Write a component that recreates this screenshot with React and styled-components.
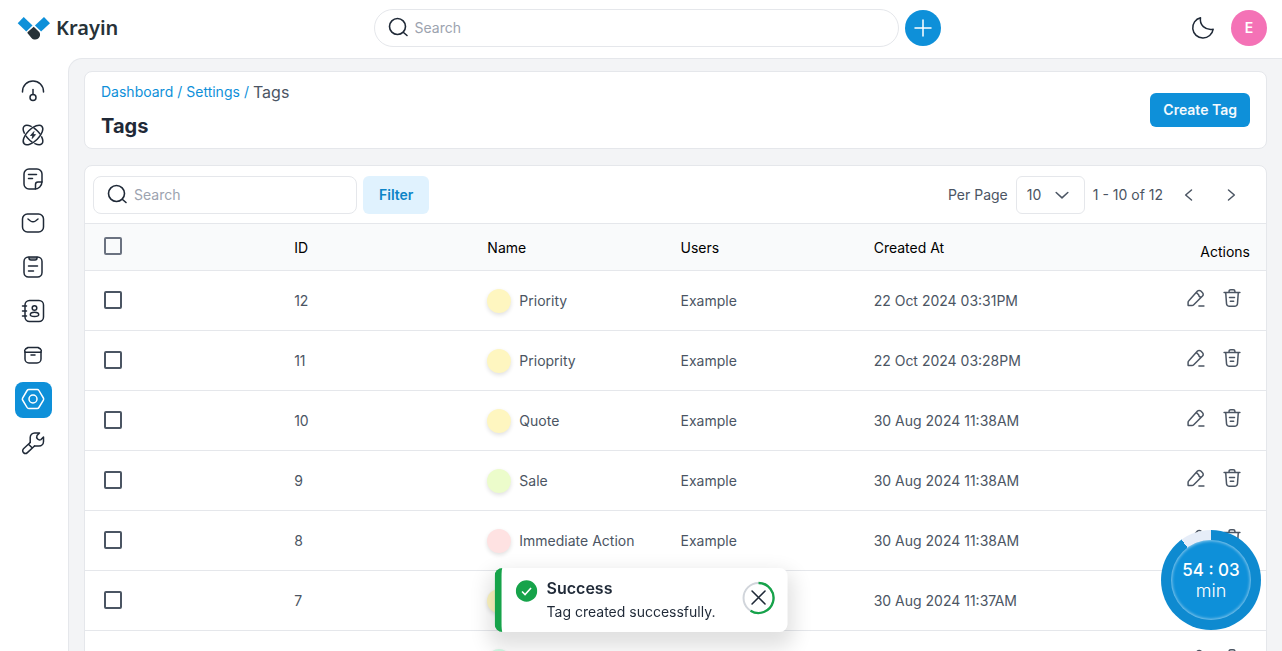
import React from "react";
import styled, { createGlobalStyle } from "styled-components";

//colors
const blue = "#0e90d9";
const line = "#e5e7eb";
const dark = "#1f2937";
const gray = "#4b5563";

//tag rows
const tags = [
  { id: "12", name: "Priority", user: "Example", date: "22 Oct 2024 03:31PM", color: "#fef6c0" },
  { id: "11", name: "Prioprity", user: "Example", date: "22 Oct 2024 03:28PM", color: "#fef6c0" },
  { id: "10", name: "Quote", user: "Example", date: "30 Aug 2024 11:38AM", color: "#fef6c0" },
  { id: "9", name: "Sale", user: "Example", date: "30 Aug 2024 11:38AM", color: "#ecfccb" },
  { id: "8", name: "Immediate Action", user: "Example", date: "30 Aug 2024 11:38AM", color: "#fee2e2" },
  { id: "7", date: "30 Aug 2024 11:37AM", color: "#fef6c0" },
  { color: "#d1fae5" },
];

//sidebar menu
const menu = [
  {
    label: "Dashboard",
    icon: (
      <>
        <path d="M1.500 13v-.5a10.500 10.500 0 0 1 21 0v.5" />
        <circle cx="12" cy="18.500" r="3" />
        <path d="M12 15.500V10.500" />
      </>
    ),
  },
  {
    label: "Leads",
    icon: (
      <>
        <ellipse cx="12" cy="12" rx="12.500" ry="6" transform="rotate(-45 12 12)" />
        <ellipse
          cx="12"
          cy="12"
          rx="12.500"
          ry="6"
          transform="rotate(45 12 12)"
          pathLength="60"
          strokeDasharray="7.500 3.400 8.200 3.400 15 3.400 8.200 3.400 7.500 0"
        />
        <path d="M12.800 8.800l-3.300 3.700h2.200l-.5 3 3.300-3.900h-2.200z" fill="currentColor" strokeWidth="0.800" />
      </>
    ),
  },
  {
    label: "Quotes",
    icon: (
      <>
        <path d="M21 14.500V7a5 5 0 0 0-5-5H8a5 5 0 0 0-5 5v10a5 5 0 0 0 5 5h5.500c4 0 7.500-3 7.500-7.500z" />
        <path d="M21 15h-4a2.500 2.500 0 0 0-2.500 2.500V22M7.500 7.500h8M7.500 11.500h4" />
      </>
    ),
  },
  {
    label: "Mail",
    icon: (
      <>
        <rect x="1.500" y="3" width="21" height="18" rx="5" />
        <path d="M7 8l2.500 2a4.500 4.500 0 0 0 5 0L17 8" />
      </>
    ),
  },
  {
    label: "Activities",
    icon: (
      <>
        <rect x="3" y="2" width="18" height="20" rx="4.500" />
        <path d="M8 2.500v.5a2 2 0 0 0 2 2h4a2 2 0 0 0 2-2v-.5M7.500 11h9M7.500 16h5" />
        <path d="M9 3.200h6" strokeWidth="2" opacity="0.6" />
      </>
    ),
  },
  {
    label: "Contacts",
    icon: (
      <>
        <rect x="4" y="1.500" width="18.500" height="21" rx="4.500" />
        <path d="M1.500 7h4M1.500 12h4M1.500 17h4" />
        <circle cx="13.500" cy="9" r="2.300" />
        <path d="M13.500 13.200c-2.500 0-4.200 1.200-4.200 2.500s1.500 1.700 4.200 1.700 4.200-.4 4.200-1.700-1.700-2.500-4.200-2.500z" />
      </>
    ),
  },
  {
    label: "Products",
    icon: (
      <>
        <path d="M4 9v7a4 4 0 0 0 4 4h8a4 4 0 0 0 4-4V9" />
        <path d="M7 4.500h10L19.500 6c.8.600 1 2 .5 3.200H4C3.500 8 3.700 6.600 4.500 6zM10 12h4" />
      </>
    ),
  },
  {
    label: "Settings",
    active: true,
    icon: (
      <>
        <path d="M7.800 2.500h8.400a2 2 0 0 1 1.700 1l4.500 7.500a2 2 0 0 1 0 2l-4.500 7.500a2 2 0 0 1-1.700 1H7.800a2 2 0 0 1-1.700-1L1.600 13a2 2 0 0 1 0-2l4.500-7.500a2 2 0 0 1 1.700-1z" />
        <circle cx="12" cy="12" r="4" />
      </>
    ),
  },
  {
    label: "Configuration",
    icon: (
      <>
        <path d="M9.200 11.500V6.500a4.500 4.500 0 0 1 4.500-4.500h4.800l-2.500 2.600a3 3 0 0 0 4 4L22.500 6v4.500a4.500 4.500 0 0 1-4.500 4.500h-4.500" />
        <path d="M9.200 11.500l-6.700 6.200a2.700 2.700 0 0 0 3.900 3.900l7.100-6.600M7.500 13.200l3.600 3.600" />
      </>
    ),
  },
];

function Icon({ size = 24, width = 1.5, children }) {
  return (
    <svg
      width={size}
      height={size}
      viewBox="0 0 24 24"
      fill="none"
      stroke="currentColor"
      strokeWidth={width}
      strokeLinecap="round"
      strokeLinejoin="round"
      aria-hidden="true"
    >
      {children}
    </svg>
  );
}

function SearchIcon() {
  return (
    <Icon width={1.6}>
      <circle cx="11.500" cy="10.500" r="8" />
      <path d="M17.500 16.500l3.500 3" />
    </Icon>
  );
}

function TagRow({ tag }) {
  return (
    <SRow>
      <td>
        <SCheck type="checkbox" aria-label="Select tag" />
      </td>
      <td>{tag.id}</td>
      <td>
        <STag>
          <SDot $color={tag.color} />
          {tag.name}
        </STag>
      </td>
      <td>{tag.user}</td>
      <td>{tag.date}</td>
      <td>
        <SActions>
          <SIconButton aria-label="Edit">
            <Icon size={20} width={1.8}>
              <path d="M2.500 20.500v-3.200a3 3 0 0 1 .9-2.100L13.800 3.700a2.800 2.800 0 0 1 4 0l2 2a2.800 2.800 0 0 1 0 4L9.300 20.100a3 3 0 0 1-2.100.9H3a.5.5 0 0 1-.5-.5zM12.500 5.300l2.800 3a2.500 2.500 0 0 0 3.200 2.500M15.500 21.500h6" />
            </Icon>
          </SIconButton>
          <SIconButton aria-label="Delete">
            <Icon size={20} width={1.8}>
              <path d="M2.500 5.500h19M8.500 5.500V4a2 2 0 0 1 2-2h3a2 2 0 0 1 2 2v1.500M4.500 6l.9 12.500A3.500 3.500 0 0 0 9 22h6a3.500 3.500 0 0 0 3.600-3.500L19.500 6M9 11.500h6M10 16h4" />
            </Icon>
          </SIconButton>
        </SActions>
      </td>
    </SRow>
  );
}

export default function App() {
  return (
    <SPage>
      <GlobalStyle />
      <SHeader>
        <SLogo href="#">
          <svg width="34" height="26" viewBox="0 0 34 26" aria-hidden="true">
            <path d="M6.700 2l8.800 8.400-6.200 6.200L.7 8.200z" fill={blue} />
            <path d="M27 2l6 6.200-8.900 8.400-6.200-6.200z" fill={blue} />
            <path
              d="M16.700 11.700l5.500 5.300c1 1 1.100 3.300.5 4.600-.8 1.800-2.500 3-4.500 3-1.600 0-2.700-.5-3.700-1.500l-3.900-4.800c-.4-.5-.3-1 .1-1.400z"
              fill="#273238"
            />
          </svg>
          Krayin
        </SLogo>
        <SHeaderCenter>
          <SSearch $round>
            <SearchIcon />
            <input type="text" placeholder="Search" aria-label="Global search" />
          </SSearch>
          <SAdd aria-label="Quick add">
            <Icon>
              <path d="M12 4v16M4 12h16" />
            </Icon>
          </SAdd>
        </SHeaderCenter>
        <SHeaderRight>
          <SIconButton $dark aria-label="Dark mode">
            <Icon>
              <path d="M9.500 1.700c-1.200 7.300 4.500 12.800 12.700 11.500A10.300 10.300 0 1 1 9.500 1.700z" />
            </Icon>
          </SIconButton>
          <SAvatar>E</SAvatar>
        </SHeaderRight>
      </SHeader>

      <SBody>
        <SSidebar aria-label="Main menu">
          {menu.map((item) => (
            <SMenuLink
              key={item.label}
              href="#"
              $active={item.active}
              aria-label={item.label}
            >
              <Icon>{item.icon}</Icon>
            </SMenuLink>
          ))}
        </SSidebar>

        <SMain>
          <STitleCard>
            <div>
              <SCrumbs aria-label="Breadcrumb">
                <a href="#">Dashboard</a>
                <i>/</i>
                <a href="#">Settings</a>
                <i>/</i>
                <span>Tags</span>
              </SCrumbs>
              <h1>Tags</h1>
            </div>
            <SPrimary>Create Tag</SPrimary>
          </STitleCard>

          <SCard>
            <SToolbar>
              <SToolGroup $gap={6}>
                <SSearch>
                  <SearchIcon />
                  <input type="text" placeholder="Search" aria-label="Search tags" />
                </SSearch>
                <SFilter>Filter</SFilter>
              </SToolGroup>
              <SToolGroup $gap={8}>
                <label htmlFor="perPage">Per Page</label>
                <SSelectWrap>
                  <select id="perPage" defaultValue="10">
                    <option>10</option>
                  </select>
                  <Icon size={20} width={1.8}>
                    <path d="M5 9l7 6.500L19 9" />
                  </Icon>
                </SSelectWrap>
                <span>1 - 10 of 12</span>
                <SPager>
                  <SIconButton aria-label="Previous page">
                    <Icon size={20} width={1.8}>
                      <path d="M15 6l-7 6 7 6" />
                    </Icon>
                  </SIconButton>
                  <SIconButton aria-label="Next page">
                    <Icon size={20} width={1.8}>
                      <path d="M9 6l7 6-7 6" />
                    </Icon>
                  </SIconButton>
                </SPager>
              </SToolGroup>
            </SToolbar>
            <STable>
              <thead>
                <SHeadRow>
                  <th>
                    <SCheck type="checkbox" $light aria-label="Select all" />
                  </th>
                  <th>ID</th>
                  <th>Name</th>
                  <th>Users</th>
                  <th>Created At</th>
                  <th>Actions</th>
                </SHeadRow>
              </thead>
              <tbody>
                {tags.map((tag, index) => (
                  <TagRow key={index} tag={tag} />
                ))}
              </tbody>
            </STable>
          </SCard>
        </SMain>
      </SBody>

      {/* flash message */}
      <SToast role="status">
        <svg width="22" height="22" viewBox="0 0 22 22" aria-hidden="true">
          <circle cx="11" cy="11" r="10.700" fill="#16a34a" />
          <path
            d="M6.500 11.500l3 3 6-6.500"
            fill="none"
            stroke="#fff"
            strokeWidth="1.600"
          />
        </svg>
        <div>
          <h2>Success</h2>
          <p>Tag created successfully.</p>
        </div>
        <SClose aria-label="Close">
          <svg width="34" height="34" viewBox="0 0 34 34" fill="none">
            <circle cx="17" cy="17" r="15" stroke="#d1d5db" strokeWidth="2" />
            <path
              d="M17 2a15 15 0 1 1-8 27.700"
              stroke="#16a34a"
              strokeWidth="2.300"
            />
            <path
              d="M10.500 10l13 13M23.500 10l-13 13"
              stroke={dark}
              strokeWidth="1.600"
              strokeLinecap="round"
            />
          </svg>
        </SClose>
      </SToast>

      {/* timer */}
      <STimer role="timer">
        <STimerFace>
          <span>54 : 03</span>
          <small>min</small>
        </STimerFace>
      </STimer>
    </SPage>
  );
}

//styled components
const GlobalStyle = createGlobalStyle`
  * {
    box-sizing: border-box;
    margin: 0;
    padding: 0;
  }
  body {
    font-family: Inter, "Liberation Sans", sans-serif;
    font-size: 14px;
    line-height: 24px;
    color: ${gray};
    background: #fff;
  }
  button, input, select {
    font: inherit;
    color: inherit;
    border: none;
    background: none;
  }
  button {
    cursor: pointer;
  }
  a {
    text-decoration: none;
  }
  svg {
    display: block;
    flex-shrink: 0;
  }
`;
const SPage = styled.div`
  height: 100vh;
  display: flex;
  flex-direction: column;
  overflow: hidden;
`;
const SHeader = styled.header`
  display: flex;
  align-items: center;
  justify-content: space-between;
  padding: 9px 15px 11px 17px;
`;
const SLogo = styled.a`
  display: flex;
  align-items: center;
  gap: 5px;
  width: 112px;
  font-family: "Noto Sans", sans-serif;
  font-size: 20px;
  font-weight: 600;
  color: #273238;
`;
const SHeaderCenter = styled.div`
  display: flex;
  align-items: center;
  gap: 6px;
  width: 567px;
  max-width: 50%;
`;
const SHeaderRight = styled.div`
  display: flex;
  align-items: center;
  gap: 10px;
`;
const SSearch = styled.label`
  display: flex;
  align-items: center;
  gap: 5px;
  width: ${(props) => (props.$round ? "100%" : "264px")};
  height: 38px;
  padding: 0 11px;
  border: 1px solid ${line};
  border-radius: ${(props) => (props.$round ? "24px" : "8px")};
  color: ${dark};
  input {
    width: 100%;
    min-width: 0;
    outline: none;
  }
  input::placeholder {
    color: #9ca3af;
  }
`;
const SAdd = styled.button`
  flex: 0 0 36px;
  height: 36px;
  display: grid;
  place-items: center;
  border-radius: 50%;
  color: #fff;
  background: ${blue};
`;
const SAvatar = styled.button`
  width: 36px;
  height: 36px;
  border-radius: 50%;
  font-weight: 600;
  color: #fff;
  background: #f472b6;
`;
const SIconButton = styled.button`
  width: 36px;
  height: 36px;
  display: grid;
  place-items: center;
  color: ${(props) => (props.$dark ? dark : gray)};
`;
const SBody = styled.div`
  flex: 1;
  min-height: 0;
  display: flex;
`;
const SSidebar = styled.nav`
  display: flex;
  flex-direction: column;
  gap: 8px;
  padding: 16px 16px 0 15px;
`;
const SMenuLink = styled.a`
  width: 37px;
  height: 36px;
  padding: 5px 6px;
  border-radius: 8px;
  color: ${(props) => (props.$active ? "#fff" : dark)};
  background: ${(props) => (props.$active ? blue : "transparent")};
`;
const SMain = styled.main`
  flex: 1;
  min-width: 0;
  padding: 12px 15px 0;
  border-top: 1px solid ${line};
  border-left: 1px solid ${line};
  border-top-left-radius: 14px;
  background: #f3f4f6;
`;
const SCard = styled.section`
  border: 1px solid ${line};
  border-radius: 8px;
  background: #fff;
`;
const STitleCard = styled(SCard)`
  display: flex;
  align-items: center;
  justify-content: space-between;
  margin-bottom: 16px;
  padding: 8px 16px;
  h1 {
    margin-top: 8px;
    font-size: 20px;
    line-height: 28px;
    font-weight: 700;
    color: ${dark};
  }
`;
const SCrumbs = styled.nav`
  display: flex;
  align-items: center;
  gap: 4px;
  color: ${blue};
  a {
    color: inherit;
  }
  i {
    font-style: normal;
  }
  span {
    font-size: 16px;
    color: ${gray};
  }
`;
const SPrimary = styled.button`
  height: 34px;
  padding: 0 13px;
  border-radius: 6px;
  font-weight: 600;
  color: #f3f9fd;
  background: ${blue};
`;
const SToolbar = styled.div`
  display: flex;
  align-items: center;
  justify-content: space-between;
  padding: 10px 17px 9px 8px;
`;
const SToolGroup = styled.div`
  display: flex;
  align-items: center;
  gap: ${(props) => props.$gap}px;
`;
const SFilter = styled.button`
  height: 38px;
  padding: 0 16px;
  border-radius: 6px;
  font-weight: 600;
  color: #0c84c7;
  background: #e0f2fe;
`;
const SSelectWrap = styled.div`
  display: grid;
  align-items: center;
  border: 1px solid ${line};
  border-radius: 6px;
  select,
  svg {
    grid-area: 1 / 1;
  }
  select {
    width: 67px;
    height: 36px;
    padding-left: 10px;
    appearance: none;
  }
  svg {
    justify-self: end;
    margin-right: 12px;
    pointer-events: none;
  }
`;
const SPager = styled.div`
  display: flex;
  gap: 6px;
`;
const STable = styled.table`
  display: block;
  thead,
  tbody {
    display: block;
  }
`;
const SCheck = styled.input`
  display: block;
  appearance: none;
  width: 18px;
  height: 18px;
  margin: 0 0 2px 3px;
  border: 2px solid ${(props) => (props.$light ? "#6b7280" : gray)};
  border-radius: 2px;
`;
const SRow = styled.tr`
  display: grid;
  grid-template-columns: repeat(6, 1fr);
  gap: 10px;
  align-items: center;
  height: 60px;
  padding: 0 16px;
  border-bottom: 1px solid ${line};
  td {
    white-space: nowrap;
  }
`;
const SHeadRow = styled(SRow)`
  height: 48px;
  color: #000;
  background: #f9fafb;
  border-top: 1px solid ${line};
  th {
    padding-top: 2px;
    font-weight: 400;
    text-align: left;
  }
  th:first-child {
    padding-top: 0;
  }
  th:last-child {
    padding-top: 10px;
    text-align: right;
  }
`;
const STag = styled.div`
  display: flex;
  align-items: center;
  gap: 8px;
`;
const SDot = styled.span`
  width: 24px;
  height: 24px;
  border-radius: 50%;
  background: ${(props) => props.$color};
  box-shadow: 0 2px 4px rgba(0, 0, 0, 0.12);
`;
const SActions = styled.div`
  display: flex;
  justify-content: flex-end;
  padding-bottom: 5px;
`;
const SToast = styled.div`
  position: fixed;
  left: 50%;
  bottom: 19px;
  transform: translateX(-50%);
  display: flex;
  align-items: flex-start;
  gap: 9px;
  padding: 8px 12px 8px 14px;
  border-left: 7px solid #16a34a;
  border-radius: 8px;
  color: ${dark};
  background: #fff;
  box-shadow: 0 10px 20px 6px rgba(0, 0, 0, 0.12);
  white-space: nowrap;
  > svg {
    margin-top: 4px;
  }
  h2 {
    font-size: 16px;
    line-height: 24px;
    font-weight: 600;
  }
`;
const SClose = styled.button`
  margin: 5px 0 0 17px;
`;
const STimer = styled.div`
  position: fixed;
  right: 21px;
  bottom: 21px;
  width: 100px;
  height: 100px;
  padding: 10px;
  border-radius: 50%;
  background: conic-gradient(#0e8ad0 324deg, #e6edf8 324deg);
`;
const STimerFace = styled.div`
  height: 100%;
  display: flex;
  flex-direction: column;
  align-items: center;
  justify-content: center;
  border-radius: 50%;
  color: #fff;
  background: ${blue};
  box-shadow: inset 0 0 3px 1px rgba(255, 255, 255, 0.5);
  span {
    font-size: 17px;
    line-height: 22px;
    font-weight: 500;
  }
  small {
    font-size: 18px;
    line-height: 20px;
    font-weight: 300;
  }
`;
